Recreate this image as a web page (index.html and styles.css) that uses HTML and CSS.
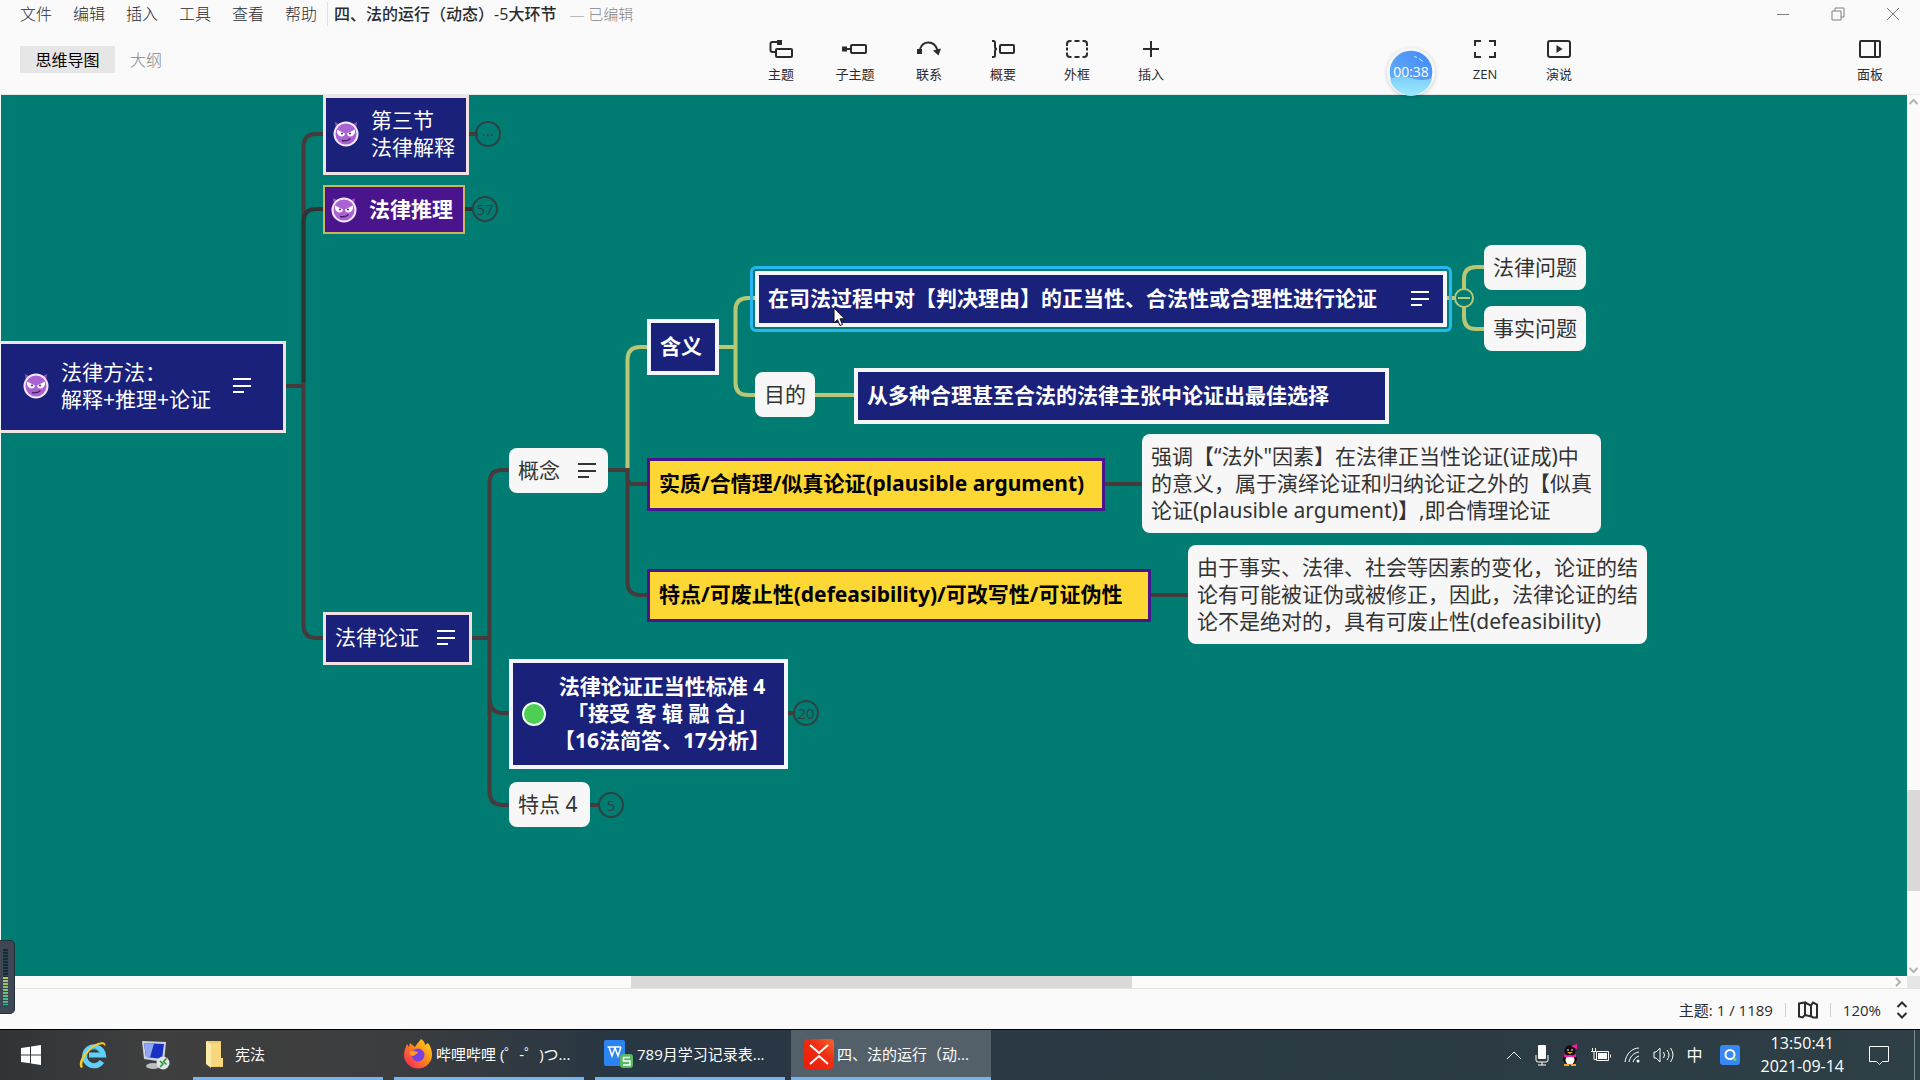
FILE: index.html
```html
<!DOCTYPE html>
<html lang="zh-CN">
<head>
<meta charset="utf-8">
<title>四、法的运行（动态）-5大环节</title>
<link rel="stylesheet" href="styles.css">
</head>
<body>
<svg class="defs" aria-hidden="true">
  <symbol id="imp" viewBox="0 0 26 26">
    <path d="M3 9 2 1l6 3M23 9l1-8-6 3" fill="#9a4fc4"/>
    <circle cx="13" cy="13" r="11.5" fill="#ab62d3" stroke="#f5e9fb" stroke-width="2"/>
    <path d="M4 8.500 12 12.500c0 4-6.500 4.500-8-1zM22 8.500 14 12.500c0 4 6.500 4.500 8-1z" fill="#fff"/>
    <circle cx="9" cy="12.500" r="1" fill="#4a2360"/><circle cx="17" cy="12.500" r="1" fill="#4a2360"/>
    <path d="M9 19.500c3 .8 6 .2 8.500-2" fill="none" stroke="#4a2360" stroke-width="1.500"/>
  </symbol>
  <symbol id="note" viewBox="0 0 18 16">
    <path d="M0 1h18M0 8h18M0 14h11" fill="none" stroke="currentColor" stroke-width="2"/>
  </symbol>
</svg>

<header class="header">
  <div class="titlebar">
    <nav class="menu">
      <button>文件</button><button>编辑</button><button>插入</button><button>工具</button><button>查看</button><button>帮助</button>
    </nav>
    <h1 class="doc-title">四、法的运行（动态）-5大环节</h1>
    <span class="doc-state">— 已编辑</span>
    <div class="win-buttons">
      <button aria-label="最小化"><svg width="14" height="14"><path d="M1 7.500h12"/></svg></button>
      <button aria-label="还原"><svg width="14" height="14"><path d="M1 4h9v9H1zM4 4V1h9v9h-3"/></svg></button>
      <button aria-label="关闭"><svg width="14" height="14"><path d="M1 1l12 12M13 1 1 13"/></svg></button>
    </div>
  </div>
  <div class="toolbar">
    <div class="tabs">
      <button class="tab tab-on">思维导图</button>
      <button class="tab">大纲</button>
    </div>
    <div class="tools">
      <button class="tool"><svg viewBox="0 0 26 24"><path d="M7 15H4.500Q2.500 15 2.500 13V7q0-2 2-2H10"/><rect x="8" y="12" width="16" height="8" rx="1"/><path class="solid" d="M9 3h5v5H9z"/></svg>主题</button>
      <button class="tool"><svg viewBox="0 0 26 24"><path d="M4 12h6"/><rect x="9" y="8" width="15" height="8" rx="1"/><path class="solid" d="M0 9.500h5v5H0z"/></svg>子主题</button>
      <button class="tool"><svg viewBox="0 0 26 24"><path d="M4 12C7 3.500 18 3 21.500 13"/><path class="solid" d="M1 12h5v5H1zM17 13.500l8-2-2.500 7z"/></svg>联系</button>
      <button class="tool"><svg viewBox="0 0 26 24"><path d="M2 4h1.500Q5 4 5 6v4q0 2 2 2-2 0-2 2v4q0 2-1.500 2H2"/><rect x="10" y="8" width="14" height="8" rx="1"/></svg>概要</button>
      <button class="tool"><svg viewBox="0 0 26 24"><path d="M3 9V7q0-3 3-3h1.500M10.500 4h5M18.500 4H20q3 0 3 3v2M23 10.500v3M23 15.500V17q0 3-3 3h-1.500M15.500 20h-5M7.500 20H6q-3 0-3-3v-1.500M3 13.500v-3"/></svg>外框</button>
      <button class="tool"><svg viewBox="0 0 26 24"><path d="M13 4v16M5 12h16"/></svg>插入</button>
    </div>
    <div class="tools-right">
      <button class="tool"><svg viewBox="0 0 26 24"><path d="M3 9V4h6M17 4h6v5M23 15v5h-6M9 20H3v-5"/></svg>ZEN</button>
      <button class="tool"><svg viewBox="0 0 26 24"><rect x="2" y="4" width="22" height="16" rx="2"/><path class="solid" d="M10.500 8v8l6-4z"/></svg>演说</button>
      <button class="tool panel-tool"><svg viewBox="0 0 26 24"><rect x="3" y="4" width="20" height="16" rx="1"/><path d="M18 4v16"/></svg>面板</button>
    </div>
  </div>
  <div class="timer"><svg viewBox="0 0 48 48"><defs><linearGradient id="tb" x1="0" y1="1" x2="1" y2="0"><stop offset="0" stop-color="#6db6fa"/><stop offset="1" stop-color="#3f86f6"/></linearGradient><linearGradient id="tw" x1="0" y1="0" x2="0" y2="1"><stop offset="0" stop-color="#7ccdf9"/><stop offset="1" stop-color="#9be9ff"/></linearGradient></defs><circle cx="24" cy="24" r="22.500" fill="url(#tb)" stroke="#f3f7fb" stroke-width="2.500"/><path d="M3 31q10-5 21-1t21 0a21.500 21.500 0 0 1-42 1z" fill="url(#tw)"/><path d="M27 8.500l3 1M32 10.500l4 3" stroke="#cfe4ff"/></svg><span>00:38</span></div>
</header>

<main class="workspace">
  <section class="canvas">
    <svg class="links" viewBox="1 95 1906 881" width="1906" height="881">
      <g class="link-dark">
        <path d="M286 386h17.500M323 134h-7q-12.500 0-12.500 13v478q0 13 13 13h7M468 134h10"/>
        <path d="M472 638h17.500M509 470h-7q-12.500 0-12.500 13v308q0 14 13 14h7M489.500 697q0 16 13 16h7M590 805h10M787 713h8"/>
        <path d="M608 470h19.500v8q0 6 6 6h14M627.500 478v104q0 13 13 13h7M1104 484h38M1150 595h38"/>
      </g>
      <g class="link-black"><path d="M323 209h-7q-12.500 0-12.500 13v160M465 209h9"/></g>
      <g class="link-olive">
        <path d="M627.500 468V360q0-13 13-13h7M718 347h17.500M756 298h-8q-12.500 0-12.500 12v73q0 12 12.500 12h8M815 395h39M1446 298h10M1484 267h-8q-12 0-12 12v10M1464 307v10q0 12 12 12h8"/>
      </g>
    </svg>

    <div class="node navy-thin n-section3"><svg class="imp"><use href="#imp"/></svg><span>第三节<br>法律解释</span></div>
    <button class="badge b-section3" aria-label="展开">···</button>
    <div class="node purple n-infer"><svg class="imp"><use href="#imp"/></svg><span>法律推理</span></div>
    <button class="badge b-infer">57</button>
    <div class="node navy-thin n-root"><svg class="imp"><use href="#imp"/></svg><span>法律方法：<br>解释+推理+论证</span><svg class="note"><use href="#note"/></svg></div>
    <div class="node navy-thin n-argue"><span>法律论证</span><svg class="note"><use href="#note"/></svg></div>
    <div class="node plain n-concept"><span>概念</span><svg class="note"><use href="#note"/></svg></div>
    <div class="node navy n-meaning"><span>含义</span></div>
    <div class="node navy selected n-process"><span>在司法过程中对【判决理由】的正当性、合法性或合理性进行论证</span><svg class="note"><use href="#note"/></svg></div>
    <button class="badge fold b-process" aria-label="折叠"></button>
    <div class="node plain n-law-q"><span>法律问题</span></div>
    <div class="node plain n-fact-q"><span>事实问题</span></div>
    <div class="node plain n-goal"><span>目的</span></div>
    <div class="node navy n-best"><span>从多种合理甚至合法的法律主张中论证出最佳选择</span></div>
    <div class="node gold n-plausible"><span>实质/合情理/似真论证(plausible argument)</span></div>
    <div class="node plain n-text1"><span>强调【“法外"因素】在法律正当性论证(证成)中<br>的意义，属于演绎论证和归纳论证之外的【似真<br>论证(plausible argument)】,即合情理论证</span></div>
    <div class="node gold n-defeasible"><span>特点/可废止性(defeasibility)/可改写性/可证伪性</span></div>
    <div class="node plain n-text2"><span>由于事实、法律、社会等因素的变化，论证的结<br>论有可能被证伪或被修正，因此，法律论证的结<br>论不是绝对的，具有可废止性(defeasibility)</span></div>
    <div class="node navy n-standard"><i class="dot"></i><span>法律论证正当性标准 4<br>「接受 客 辑 融 合」<br>【16法简答、17分析】</span></div>
    <button class="badge b-standard">20</button>
    <div class="node plain n-traits"><span>特点 4</span></div>
    <button class="badge b-traits">5</button>

    <svg class="cursor" viewBox="0 0 13 20"><path d="M1 1v15l3.500-3.300L7 18.500l2.500-1-2.500-5.700h4.500z" fill="#fff" stroke="#111"/></svg>
  </section>
  <div class="vbar"><svg viewBox="0 0 13 14"><path d="M2.500 9l4-4 4 4"/></svg><i class="thumb"></i><svg class="end" viewBox="0 0 13 14"><path d="M2.500 6l4 4 4-4"/></svg></div>
  <div class="hbar"><i class="thumb"></i><svg viewBox="0 0 14 12"><path d="M3 2l4 4-4 4"/></svg></div>
  <div class="corner"></div>
</main>

<footer class="status">
  <span>主题: 1 / 1189</span>
  <i class="rule"></i>
  <button aria-label="导航"><svg width="20" height="18" viewBox="0 0 20 18"><path d="M1 2.500 7 1.500V14L4.500 16.500 1 15.500zM7 1.500l6 3v11L7 14M13 4.500l2-3 4 2v13h-4L13 15"/></svg></button>
  <i class="rule"></i>
  <button class="zoom">120%<svg width="12" height="18" viewBox="0 0 12 18"><path d="M1.500 6 6 1.500 10.500 6M1.500 12 6 16.500 10.500 12"/></svg></button>
</footer>

<div class="meter"><i class="off"></i><i class="on"></i></div>

<nav class="taskbar">
  <button class="sys" aria-label="开始"><svg width="20" height="20" viewBox="0 0 20 20"><path fill="#fff" d="M0 3l9-1.300V9.500H0zM10 1.500 20 0v9.500H10zM0 10.500h9v7.800L0 17zM10 10.500h10V20l-10-1.500z"/></svg></button>
  <button class="sys" aria-label="Internet Explorer"><svg width="30" height="30" viewBox="0 0 30 30"><path d="M24 21.500A9.500 9.500 0 1 1 25.500 15H11" fill="none" stroke="#5fd0fb" stroke-width="5"/><path d="M9 11.500q6-7 12 0" fill="none" stroke="#35aee8"/><path d="M3 28C-2 22 9 7 20 3c7-2 8 0 7 4 0-4-5-3-9-1C10 10 2 22 5 27z" fill="#fbc928"/></svg></button>
  <button class="sys" aria-label="远程桌面"><svg width="30" height="30" viewBox="0 0 30 30"><path d="M2 1l24 1-2 20L4 19z" fill="#cdd3df"/><path d="M4 3l20 1-2 15L6 17z" fill="#1830c4"/><path d="M4 3l10 .5L10 17.500 6 17z" fill="#8fa6f4"/><ellipse cx="13" cy="26" rx="7" ry="3" fill="#b9bec5"/><circle cx="23" cy="23" r="6.500" fill="#e4e6e6"/><path d="M20 21l3 3-3 3M26.500 18.500l-3 3 3 3" fill="none" stroke="#27943a" stroke-width="1.500"/></svg></button>
  <button class="task"><svg width="30" height="30" viewBox="0 0 30 30"><path d="M4 2h15v17h2v9H9z" fill="#f3cc66"/><path d="M4 2l5 3v24l-5-4z" fill="#fde9a6"/><path d="M9 4h10v15h2v8H9z" fill="#f9d77e"/></svg>宪法</button>
  <button class="task"><svg width="30" height="30" viewBox="0 0 30 30"><defs><linearGradient id="fx" x1="1" y1="0" x2="0" y2="1"><stop offset="0" stop-color="#ffe226"/><stop offset=".45" stop-color="#ff8a16"/><stop offset="1" stop-color="#f5156c"/></linearGradient></defs><path d="M18 0c3 2 4 4 4 6l3-2c3 4 4 8 4 12a14 13.500 0 0 1-28 0C1 11 3 8 4 5l2 3 1-4 5 4c2-4 4-5 6-8z" fill="url(#fx)"/><circle cx="15" cy="16" r="6.500" fill="#7a3fe0"/><path d="M7 13c3-2 6 0 8 0-1 3-4 2-4 4-3 0-5-2-4-4z" fill="#ff9b1d"/></svg>哔哩哔哩 (゜-゜)つ...</button>
  <button class="task"><svg width="30" height="30" viewBox="0 0 30 30"><rect x="0" y="1" width="21" height="26" rx="2" fill="#2d83f2"/><path d="M3.500 8H17M5 8l3 9 3-8 3 8 3-9" fill="none" stroke="#fff" stroke-width="1.500"/><rect x="16" y="15" width="13" height="14" rx="3" fill="#58b866"/><path d="M26 18.500h-6.500V22H26v4h-7" fill="none" stroke="#fff" stroke-width="1.500"/></svg>789月学习记录表...</button>
  <button class="task task-on"><svg width="30" height="30" viewBox="0 0 30 30"><defs><linearGradient id="xm" x1="1" y1="0" x2="0" y2="1"><stop offset="0" stop-color="#f06a35"/><stop offset=".4" stop-color="#ee2f12"/><stop offset="1" stop-color="#ea1d0a"/></linearGradient></defs><rect width="30" height="30" rx="4" fill="url(#xm)"/><path d="M6 6l9 8 9-8M6 25l9-8 9 8" fill="none" stroke="#fff" stroke-width="2"/></svg>四、法的运行（动...</button>
  <div class="tray">
    <svg width="16" height="20" viewBox="0 0 16 20"><path class="line" d="M1 14l7-7 7 7"/></svg>
    <svg width="14" height="22" viewBox="0 0 14 22"><rect x="3" y="1" width="8" height="14" rx="1" fill="#fff"/><path class="line" d="M1 11v5q0 2 2 2h8q2 0 2-2v-5M7 18v3M3 21h8"/></svg>
    <svg width="16" height="22" viewBox="0 0 16 22"><ellipse cx="8" cy="7" rx="5.500" ry="6" fill="#111"/><ellipse cx="8" cy="15" rx="7" ry="5.500" fill="#111"/><ellipse cx="8" cy="16" rx="4.500" ry="4.500" fill="#fff"/><path d="M2 10q6 3 12 0v3H2zM9 2l6-2v5z" fill="#ff1a9b"/><path class="line" d="M6 5v2M10 5v2"/><path d="M5 8h6l-3 2zM2 20h5v2H2zM9 20h5v2H9z" fill="#f7a820"/></svg>
    <svg width="20" height="16" viewBox="0 0 20 16"><rect x="7" y="6" width="9" height="6" fill="#fff"/><path class="line" d="M5.500 4.500h12v9h-12zM19.500 7.500v3M1.500 1v3M4.500 1v3M0 4.500h5M3 5v7.500h3"/></svg>
    <svg width="16" height="18" viewBox="0 0 16 18"><path class="line" d="M1 16C2 8 8 2 15 2M5 16c1-5 4-9 10-10M9 16c1-3 3-5 6-6"/><circle cx="14" cy="15" r="1.500" fill="#fff"/></svg>
    <svg width="21" height="18" viewBox="0 0 21 18"><path class="line" d="M1 6v6h2l4 4V2L3 6zM10.500 6q2 3 0 6M14 4q4 5 0 10M17.500 2q5 7 0 14"/></svg>
    <span class="ime">中</span>
    <svg class="q" width="20" height="20" viewBox="0 0 20 20"><rect width="20" height="20" rx="3" fill="#3987f4"/><circle cx="10" cy="9.500" r="4.500" stroke="#fff" stroke-width="2"/><circle cx="15" cy="14.500" r="1.500" fill="#4ee06a"/></svg>
    <time class="clock">13:50:41<br>2021-09-14</time>
    <svg width="22" height="22" viewBox="0 0 22 22"><path class="line" d="M1.500 2.500h19v15h-6l-3 3-3-3h-7z"/></svg>
  </div>
  <button class="peek" aria-label="显示桌面"></button>
</nav>
</body>
</html>
```
FILE: styles.css
```css
* { box-sizing: border-box; }

body {
  margin: 0;
  height: 100vh;
  display: flex;
  flex-direction: column;
  overflow: hidden;
  position: relative;
  background: #fafafa;
  color: #2b2b2e;
  font: 16px/24px "Open Sans", "Noto Sans CJK SC", sans-serif;
}

button {
  margin: 0;
  padding: 0;
  border: 0;
  background: none;
  color: inherit;
  font: inherit;
  white-space: nowrap;
}

svg { display: block; flex: none; }
.defs { position: absolute; width: 0; height: 0; }

/* Header */
.header {
  position: relative;
  flex: none;
  height: 95px;
  border-bottom: 1px solid #e4eaea;
}

.titlebar {
  display: flex;
  align-items: center;
  height: 28px;
  padding: 0 20px;
}

.menu {
  display: flex;
  gap: 21px;
  padding-right: 10px;
  border-right: 1px solid #e2e2e2;
  font-weight: 300;
}

.doc-title {
  margin: 0 13px 0 6px;
  font-size: 16px;
  font-weight: 500;
}

.doc-state { color: #85858a; font-size: 15px; font-weight: 300; }

.win-buttons { display: flex; gap: 41px; margin-left: auto; }
.win-buttons path { fill: none; stroke: #808084; }

.toolbar {
  display: grid;
  grid-template-columns: 1fr auto 1fr;
  padding: 9px 8px 0 20px;
}

.tabs { display: flex; align-items: flex-start; gap: 15px; padding-top: 9px; font-weight: 300; }
.tab { height: 27px; color: #85858a; }
.tab-on { width: 95px; background: #e6e6e6; color: #000; font-weight: 400; }

.tools, .tools-right { display: flex; }
.tools-right { justify-content: flex-end; }

.tool {
  display: flex;
  flex-direction: column;
  align-items: center;
  gap: 4px;
  width: 74px;
  font-size: 13px;
  line-height: 18px;
}
.tool svg { width: 26px; height: 24px; }
.tool path, .tool rect { fill: none; stroke: #2b2b2e; stroke-width: 2; }
.tool .solid { fill: #2b2b2e; stroke: none; }
.panel-tool { margin: 0 5px 0 237px; }

.timer {
  position: absolute;
  right: 485px;
  top: 48px;
  z-index: 2;
  display: grid;
  place-items: center;
  width: 48px;
  height: 48px;
  border-radius: 50%;
  box-shadow: 0 1px 4px #0003;
  color: #fff;
  font: 400 14px/20px "Open Sans", sans-serif;
}
.timer > * { grid-area: 1 / 1; }
.timer span { z-index: 1; }
.timer svg { width: 48px; height: 48px; }

/* Workspace */
.workspace {
  flex: 1;
  min-height: 0;
  display: grid;
  grid-template-columns: 1fr 13px;
  grid-template-rows: 1fr 12px;
}

.canvas {
  position: relative;
  overflow: hidden;
  border-left: 1px solid #f4fafa;
  background: #007c73;
}

.links { position: absolute; left: 0; top: 0; }
.links path { fill: none; stroke-width: 4; }
.link-dark { stroke: #453a3c; }
.link-black { stroke: #2f3334; }
.link-olive { stroke: #b7c773; }

.vbar, .hbar { display: grid; background: #fbfbfa; }
.vbar { grid-template-rows: 14px 681fr 101fr 71fr 14px; }
.vbar .thumb { grid-row: 3; }
.vbar .end { grid-row: 5; }
.hbar { grid-template-columns: 631fr 501fr 761fr 14px; }
.hbar .thumb { grid-column: 2; }
.hbar svg { grid-column: 4; height: 12px; }
.thumb { background: #dadad9; }
.vbar path, .hbar path { fill: none; stroke: #b4b4b4; stroke-width: 2; }
.corner { background: #e6e6e6; }

/* Topics */
.node {
  position: absolute;
  display: flex;
  align-items: center;
  white-space: nowrap;
  font: 400 21px/27px "Noto Sans", "Noto Sans CJK SC", sans-serif;
}
.plain { padding: 9px; border-radius: 8px; background: #f7f7f7; color: #333; }
.navy { padding: 10px 9px 11px; border: 4px solid #f5f6fb; background: #1a217b; color: #fff; font-weight: 700; }
.navy-thin { padding: 9px 9px 11px; border: 3px solid #f4e1e5; background: #1a217b; color: #fff; }
.purple { padding: 9px 6px; border: 2px solid #cbb65a; background: #4a148c; color: #fff; font-weight: 700; }
.gold { padding: 9px 9px 11px; border: 3px solid #4a148c; background: #fdd835; color: #000; font-weight: 700; }
.selected { outline: 3px solid #28b6f3; outline-offset: 2px; border-radius: 1px; }

.imp { width: 26px; height: 26px; margin-right: 12px; }
.note { width: 18px; height: 16px; margin-left: auto; }
.dot { width: 24px; height: 24px; border: 2px solid #f2fff2; border-radius: 50%; background: #4ccf54; margin-right: 8px; }

.n-section3 { left: 322px; top: 0; width: 146px; height: 80px; padding-left: 7px; }
.n-infer { left: 322px; top: 90px; width: 142px; }
.n-root { left: 0; top: 246px; width: 285px; height: 92px; padding: 0 32px 2px 22px; border-left: 0; }
.n-argue { left: 322px; top: 517px; width: 149px; padding-right: 14px; }
.n-concept { left: 508px; top: 353px; width: 99px; padding-right: 12px; }
.n-meaning { left: 646px; top: 224px; width: 72px; }
.n-process { left: 754px; top: 176px; width: 692px; padding-right: 14px; }
.n-law-q { left: 1483px; top: 150px; width: 102px; }
.n-fact-q { left: 1483px; top: 211px; width: 102px; }
.n-goal { left: 754px; top: 277px; width: 60px; }
.n-best { left: 853px; top: 273px; width: 535px; }
.n-plausible { left: 646px; top: 363px; width: 458px; }
.n-text1 { left: 1141px; top: 339px; width: 459px; }
.n-defeasible { left: 646px; top: 474px; width: 504px; }
.n-text2 { left: 1187px; top: 450px; width: 459px; }
.n-standard { left: 508px; top: 564px; width: 279px; text-align: center; }
.n-traits { left: 508px; top: 687px; width: 81px; }

.badge {
  position: absolute;
  width: 26px;
  height: 26px;
  border: 2px solid #2c4243;
  border-radius: 50%;
  color: #2c4243;
  font: 400 15px/22px "Open Sans", sans-serif;
}
.b-section3 { left: 474px; top: 26px; }
.b-infer { left: 471px; top: 101px; }
.b-standard { left: 792px; top: 605px; }
.b-traits { left: 597px; top: 697px; }
.fold { width: 20px; height: 20px; border-color: #b7c773; display: grid; place-items: center; }
.fold::before { content: ""; width: 12px; height: 2px; background: #b7c773; }
.b-process { left: 1453px; top: 193px; }

.cursor { position: absolute; left: 832px; top: 212px; width: 13px; height: 20px; }

/* Status bar */
.status {
  flex: none;
  display: flex;
  align-items: center;
  justify-content: flex-end;
  gap: 12px;
  height: 41px;
  padding: 2px 12px 0 0;
  border-top: 1px solid #e3e3e6;
  font-size: 15px;
}
.status path { fill: none; stroke: #2b2b2e; stroke-width: 2; }
.rule { width: 1px; height: 14px; background: #cfcfcf; }
.zoom { display: flex; align-items: center; gap: 15px; }

.meter {
  position: absolute;
  left: 0;
  bottom: 66px;
  display: flex;
  flex-direction: column;
  width: 15px;
  height: 74px;
  padding: 8px 6px 8px 3px;
  border: 1px solid #22303a;
  border-left: 0;
  border-radius: 0 5px 5px 0;
  background: #3f4654;
}
.meter i { flex: 1; }
.meter .off { background: repeating-linear-gradient(#152b38 0 2px, #334454 2px 3px); }
.meter .on { background: repeating-linear-gradient(#0000 0 2px, #3f4654 2px 3px), linear-gradient(#b7c858, #35b795); }

/* Taskbar */
.taskbar {
  flex: none;
  display: flex;
  height: 51px;
  border-top: 1px solid #000;
  background: linear-gradient(90deg, #303437, #3f3f3f 8%, #3c3d3e 20%, #283744 32%, #2a3942 60%, #2f3f46);
  color: #fff;
  font-size: 15px;
}
.sys { display: grid; place-items: center; width: 62px; }
.task {
  display: flex;
  align-items: center;
  gap: 3px;
  width: 190px;
  margin-right: 11px;
  padding-left: 9px;
  border-bottom: 3px solid #75b5eb;
}
.sys + .task { margin-left: 7px; }
.task-on { width: 200px; padding-left: 13px; margin-left: -5px; background: #536069; }

.tray { display: flex; align-items: center; gap: 13px; margin-left: auto; padding-right: 24px; }
.tray svg { fill: none; }
.tray .line { stroke: #fff; }
.ime { font-size: 16px; }
.q { margin-left: 4px; }
.clock { margin: 0 11px 0 8px; text-align: center; font-size: 16px; line-height: 23px; }
.peek { width: 6px; border-left: 1px solid #7d888d; }
```
